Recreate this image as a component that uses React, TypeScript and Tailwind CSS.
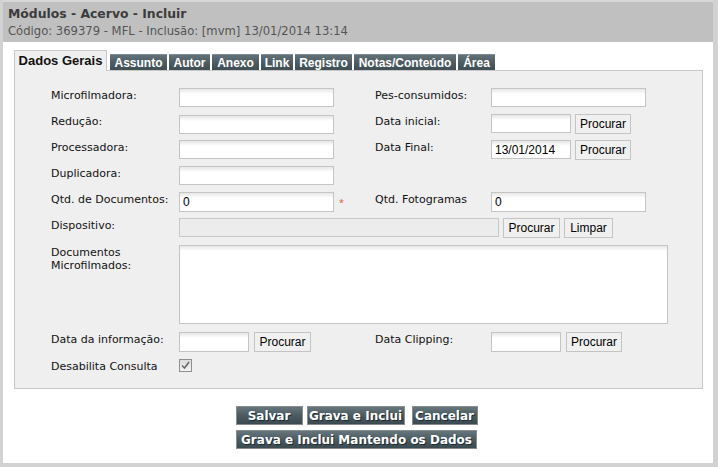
import React from 'react';

const labelFont = { fontFamily: '"DejaVu Sans", Verdana, sans-serif' };

const fieldBg = 'bg-white bg-[linear-gradient(to_bottom,#e6e6e6,#ffffff_5px)]';

const inputCls = `block h-[19px] border border-[#c4c4c4] ${fieldBg} px-[3px] text-[12px] font-["Liberation_Sans",Arial,sans-serif] text-black outline-none`;

function Procurar({ label = 'Procurar', w = 'w-[56px]' }: { label?: string; w?: string }) {
  return (
    <button
      className={`block ${w} h-[20px] border border-[#c4c4c4] bg-[#f0f0f0] text-[12px] font-["Liberation_Sans",Arial,sans-serif] text-black leading-none`}
    >
      {label}
    </button>
  );
}

function Label({ text, w, lh = 'leading-[14px]' }: { text: React.ReactNode; w: string; lh?: string }) {
  return (
    <div className={`${w} shrink-0 text-[11px] ${lh} text-[#111] pt-[1px]`} style={labelFont}>
      {text}
    </div>
  );
}

const tabs = [
  { t: 'Assunto', w: 'w-[57px]' },
  { t: 'Autor', w: 'w-[41px]' },
  { t: 'Anexo', w: 'w-[47px]' },
  { t: 'Link', w: 'w-[32px]' },
  { t: 'Registro', w: 'w-[57px]' },
  { t: 'Notas/Conteúdo', w: 'w-[102px]' },
  { t: 'Área', w: 'w-[37px]' },
];

function DarkButton({ children, w }: { children: React.ReactNode; w: string }) {
  return (
    <button
      className={`${w} h-[19px] border border-[#8c8c8c] bg-gradient-to-b from-[#66767d] via-[#4b5b61] to-[#3b4a50] text-[12px] font-bold text-white leading-none [text-shadow:1px_1px_0_#1f2a2e]`}
      style={labelFont}
    >
      {children}
    </button>
  );
}

export default function App() {
  return (
    <div className="w-[718px] h-[467px] bg-white border-l-[3px] border-r-[5px] border-b-[4px] border-[#d2d2d2] flex flex-col overflow-hidden">
      <div className="h-[42px] shrink-0 bg-[#c0c0c0] border-t-[2px] border-[#d8d8d8] pl-[5px] pt-[3px]" style={labelFont}>
        <div className="text-[12.4px] font-bold text-[#3c3c3c] leading-[18px]">Módulos - Acervo - Incluir</div>
        <div className="text-[11.6px] text-[#555] leading-[16px]">Código: 369379 - MFL - Inclusão: [mvm] 13/01/2014 13:14</div>
      </div>

      <div className="pl-[11px] pt-[8px]">
        <div className="flex items-end h-[20px] gap-[2px]">
          <div className="h-[21px] w-[93px] mr-[1px] -mb-[1px] border border-b-0 border-[#c8c8c8] bg-[#efefef] flex items-center justify-center text-[13px] font-bold text-[#111] font-['Liberation_Sans',Arial,sans-serif] relative z-10">
            Dados Gerais
          </div>
          {tabs.map(({ t, w }) => (
            <div
              key={t}
              className={`${w} h-[16px] bg-gradient-to-b from-[#637279] via-[#4e5d63] to-[#3f4e54] border-t border-[#7d8c92] flex items-center justify-center text-[12px] font-bold text-white font-['Liberation_Sans',Arial,sans-serif] leading-none`}
            >
              {t}
            </div>
          ))}
        </div>

        <div className="w-[689px] h-[319px] border border-[#c8c8c8] bg-[#efefef] pl-[36px] pt-[17px] flex flex-col">
          {/* row 1 */}
          <div className="flex h-[26px]">
            <div className="flex w-[324px]">
              <Label text="Microfilmadora:" w="w-[128px]" />
              <input className={`${inputCls} w-[155px]`} />
            </div>
            <div className="flex">
              <Label text="Pes-consumidos:" w="w-[116px]" />
              <input className={`${inputCls} w-[155px]`} />
            </div>
          </div>
          {/* row 2 */}
          <div className="flex h-[26px]">
            <div className="flex w-[324px]">
              <Label text="Redução:" w="w-[128px]" />
              <input className={`${inputCls} w-[155px] mt-[1px]`} />
            </div>
            <div className="flex items-start">
              <Label text="Data inicial:" w="w-[116px]" />
              <input className={`${inputCls} w-[80px]`} />
              <div className="ml-[4px]">
                <Procurar />
              </div>
            </div>
          </div>
          {/* row 3 */}
          <div className="flex h-[26px]">
            <div className="flex w-[324px]">
              <Label text="Processadora:" w="w-[128px]" />
              <input className={`${inputCls} w-[155px]`} />
            </div>
            <div className="flex items-start">
              <Label text="Data Final:" w="w-[116px]" />
              <input className={`${inputCls} w-[80px]`} defaultValue="13/01/2014" />
              <div className="ml-[4px]">
                <Procurar />
              </div>
            </div>
          </div>
          {/* row 4 */}
          <div className="flex h-[26px]">
            <div className="flex w-[324px]">
              <Label text="Duplicadora:" w="w-[128px]" />
              <input className={`${inputCls} w-[155px]`} />
            </div>
          </div>
          {/* row 5 */}
          <div className="flex h-[26px]">
            <div className="flex w-[324px] items-start">
              <Label text="Qtd. de Documentos:" w="w-[128px]" />
              <input className={`${inputCls} w-[155px] h-[20px]`} defaultValue="0" />
              <span className="ml-[5px] mt-[6px] text-[9px] text-[#e0603a] leading-none">*</span>
            </div>
            <div className="flex items-start">
              <Label text="Qtd. Fotogramas" w="w-[116px]" />
              <input className={`${inputCls} w-[155px] h-[20px]`} defaultValue="0" />
            </div>
          </div>
          {/* row 6 */}
          <div className="flex h-[27px] items-start">
            <Label text="Dispositivo:" w="w-[128px]" />
            <input disabled className="block h-[19px] w-[320px] border border-[#c8c8c8] bg-[#ececec]" />
            <div className="ml-[4px] flex gap-[4px]">
              <Procurar w="w-[57px]" />
              <Procurar label="Limpar" w="w-[49px]" />
            </div>
          </div>
          {/* row 7 */}
          <div className="flex h-[87px] items-start">
            <Label text={<>Documentos<br />Microfilmados:</>} w="w-[128px]" lh="leading-[13px]" />
            <textarea className={`block h-[79px] w-[489px] border border-[#c4c4c4] ${fieldBg} resize-none outline-none`} />
          </div>
          {/* row 8 */}
          <div className="flex h-[27px] items-start">
            <div className="flex w-[324px] items-start">
              <Label text="Data da informação:" w="w-[128px]" />
              <input className={`${inputCls} w-[70px] h-[20px]`} />
              <div className="ml-[5px]">
                <Procurar w="w-[57px]" />
              </div>
            </div>
            <div className="flex items-start">
              <Label text="Data Clipping:" w="w-[116px]" />
              <input className={`${inputCls} w-[70px] h-[20px]`} />
              <div className="ml-[5px]">
                <Procurar w="w-[56px]" />
              </div>
            </div>
          </div>
          {/* row 9 */}
          <div className="flex">
            <Label text="Desabilita Consulta" w="w-[128px]" />
            <span className="w-[13px] h-[13px] border border-[#8f8f8f] bg-gradient-to-b from-[#dcdcdc] to-[#f4f4f4] flex items-center justify-center">
              <svg width="9" height="9" viewBox="0 0 9 9">
                <path d="M1 4.5 L3.5 7 L8 1" fill="none" stroke="#6a6a6a" strokeWidth="1.6" />
              </svg>
            </span>
          </div>
        </div>
      </div>

      <div className="flex flex-col items-center pt-[17px] gap-[5px] pr-[3px]">
        <div className="flex gap-[4px]">
          <DarkButton w="w-[67px]">Salvar</DarkButton>
          <DarkButton w="w-[98px] mr-[3px]">Grava e Inclui</DarkButton>
          <DarkButton w="w-[66px]">Cancelar</DarkButton>
        </div>
        <DarkButton w="w-[241px]">Grava e Inclui Mantendo os Dados</DarkButton>
      </div>
    </div>
  );
}
